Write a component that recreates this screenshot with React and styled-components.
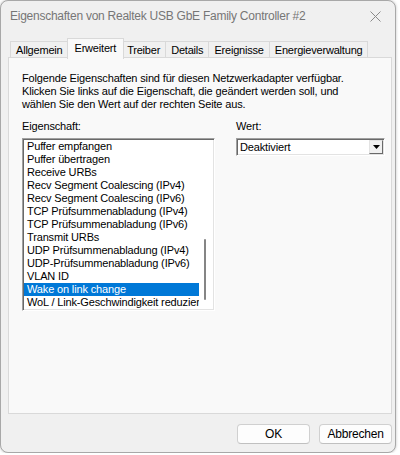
import React from 'react';
import styled, { createGlobalStyle } from 'styled-components';

const GlobalStyle = createGlobalStyle`
  body {
    margin: 0;
    background: #ffffff;
    font-family: 'Liberation Sans', Arial, sans-serif;
  }
`;

const Window = styled.div`
  width: 394px;
  height: 451px;
  border: 1px solid #a8a8a8;
  border-radius: 8px;
  background: #f0f0f0;
  box-shadow: 0 0 3px rgba(0, 0, 0, 0.25);
  display: flex;
  flex-direction: column;
  overflow: hidden;
`;

const TitleBar = styled.div`
  height: 30px;
  padding: 0 8px 6px 9px;
  display: flex;
  align-items: center;
  justify-content: space-between;
  flex-shrink: 0;
`;

const Title = styled.div`
  font-size: 12px;
  color: #767676;
  letter-spacing: -0.25px;
`;

const CloseButton = styled.div`
  width: 24px;
  height: 24px;
  display: flex;
  align-items: center;
  justify-content: center;
`;

const TabStrip = styled.div`
  display: flex;
  align-items: flex-end;
  height: 21px;
  padding-left: 9px;
  position: relative;
  z-index: 1;
`;

const Tab = styled.div`
  height: ${p => (p.$active ? '21px' : '17px')};
  margin: ${p => (p.$active ? '0 -2px -1px -2px' : '0')};
  padding: ${p => (p.$active ? '3px 7px 0' : '0 5px')};
  border: 1px solid #d9d9d9;
  border-bottom: ${p => (p.$active ? 'none' : '1px solid #d9d9d9')};
  border-left: ${p => (p.$first || p.$active ? '1px solid #d9d9d9' : 'none')};
  background: ${p => (p.$active ? '#f9f9f9' : '#f0f0f0')};
  font-size: 11px;
  letter-spacing: -0.2px;
  color: #000;
  display: flex;
  align-items: ${p => (p.$active ? 'flex-start' : 'center')};
  box-sizing: border-box;
  position: relative;
  z-index: ${p => (p.$active ? 2 : 1)};
`;

const Panel = styled.div`
  margin: -1px 0 0 7px;
  width: 369px;
  height: 341px;
  border: 1px solid #d9d9d9;
  background: #f9f9f9;
  padding: 14px 0 0 13px;
  font-size: 11px;
  letter-spacing: -0.15px;
  color: #000;
`;

const Description = styled.p`
  margin: 0;
  line-height: 13px;
  white-space: nowrap;
`;

const Columns = styled.div`
  display: flex;
  margin-top: 9px;
  gap: 21px;
`;

const Column = styled.div`
  display: flex;
  flex-direction: column;
  width: ${p => p.$width}px;
`;

const Label = styled.div`
  line-height: 13px;
  margin-bottom: 5px;
`;

const ListBox = styled.div`
  height: 169px;
  background: #fff;
  border-top: 1px solid #a0a0a0;
  border-left: 1px solid #a0a0a0;
  border-right: 1px solid #ffffff;
  border-bottom: 1px solid #ffffff;
  box-shadow: inset 1px 1px 0 #696969, inset -1px -1px 0 #e3e3e3;
  padding: 1px;
  display: flex;
`;

const Items = styled.div`
  width: 175px;
  overflow: hidden;
`;

const Item = styled.div`
  height: 13px;
  line-height: 13px;
  padding-left: 3px;
  white-space: nowrap;
  background: ${p => (p.$selected ? '#0078d7' : 'transparent')};
  color: ${p => (p.$selected ? '#fff' : '#000')};
`;

const ScrollTrack = styled.div`
  flex: 1;
  display: flex;
  justify-content: center;
  padding-right: 3px;
`;

const ScrollThumb = styled.div`
  width: 2px;
  height: 61px;
  margin-top: 99px;
  background: #858585;
  border-radius: 1px;
`;

const Combo = styled.div`
  height: 14px;
  background: #fff;
  border-top: 1px solid #a0a0a0;
  border-left: 1px solid #a0a0a0;
  border-right: 1px solid #ffffff;
  border-bottom: 1px solid #ffffff;
  box-shadow: inset 1px 1px 0 #696969, inset -1px -1px 0 #e3e3e3;
  padding: 1px 1px 1px 3px;
  display: flex;
  align-items: center;
  justify-content: space-between;
`;

const ComboText = styled.span`
  line-height: 14px;
`;

const ArrowButton = styled.div`
  width: 14px;
  height: 14px;
  box-sizing: border-box;
  background: #f0f0f0;
  border-top: 1px solid #e3e3e3;
  border-left: 1px solid #e3e3e3;
  border-right: 1px solid #696969;
  border-bottom: 1px solid #696969;
  display: flex;
  align-items: center;
  justify-content: center;
`;

const ButtonRow = styled.div`
  display: flex;
  justify-content: flex-end;
  gap: 9px;
  margin-top: 10px;
  padding-right: 3px;
`;

const Button = styled.button`
  width: 73px;
  height: 20px;
  border: 1px solid #d0d0d0;
  border-bottom-color: #c0c0c0;
  border-radius: 4px;
  background: #fdfdfd;
  font-family: 'Liberation Sans', Arial, sans-serif;
  font-size: 12px;
  letter-spacing: -0.2px;
  color: #000;
  padding: 0;
`;

const properties = [
  'Puffer empfangen',
  'Puffer übertragen',
  'Receive URBs',
  'Recv Segment Coalescing (IPv4)',
  'Recv Segment Coalescing (IPv6)',
  'TCP Prüfsummenabladung (IPv4)',
  'TCP Prüfsummenabladung (IPv6)',
  'Transmit URBs',
  'UDP Prüfsummenabladung (IPv4)',
  'UDP-Prüfsummenabladung (IPv6)',
  'VLAN ID',
  'Wake on link change',
  'WoL / Link-Geschwindigkeit reduzieren',
];

const tabs = ['Allgemein', 'Erweitert', 'Treiber', 'Details', 'Ereignisse', 'Energieverwaltung'];

export default function App() {
  return (
    <>
      <GlobalStyle />
      <Window>
        <TitleBar>
          <Title>Eigenschaften von Realtek USB GbE Family Controller #2</Title>
          <CloseButton>
            <svg width="11" height="11" viewBox="0 0 11 11">
              <path d="M0.5 0.5 L10.5 10.5 M10.5 0.5 L0.5 10.5" stroke="#8a8a8a" strokeWidth="1" />
            </svg>
          </CloseButton>
        </TitleBar>
        <TabStrip>
          {tabs.map((t, i) => (
            <Tab key={t} $active={t === 'Erweitert'} $first={i === 0}>
              {t}
            </Tab>
          ))}
        </TabStrip>
        <Panel>
          <Description>
            Folgende Eigenschaften sind für diesen Netzwerkadapter verfügbar.
            <br />
            Klicken Sie links auf die Eigenschaft, die geändert werden soll, und
            <br />
            wählen Sie den Wert auf der rechten Seite aus.
          </Description>
          <Columns>
            <Column $width={193}>
              <Label>Eigenschaft:</Label>
              <ListBox>
                <Items>
                  {properties.map(p => (
                    <Item key={p} $selected={p === 'Wake on link change'}>
                      {p}
                    </Item>
                  ))}
                </Items>
                <ScrollTrack>
                  <ScrollThumb />
                </ScrollTrack>
              </ListBox>
            </Column>
            <Column $width={149}>
              <Label>Wert:</Label>
              <Combo>
                <ComboText>Deaktiviert</ComboText>
                <ArrowButton>
                  <svg width="7" height="4" viewBox="0 0 7 4">
                    <path d="M0 0 H7 L3.5 4 Z" fill="#000" />
                  </svg>
                </ArrowButton>
              </Combo>
            </Column>
          </Columns>
        </Panel>
        <ButtonRow>
          <Button>OK</Button>
          <Button>Abbrechen</Button>
        </ButtonRow>
      </Window>
    </>
  );
}
